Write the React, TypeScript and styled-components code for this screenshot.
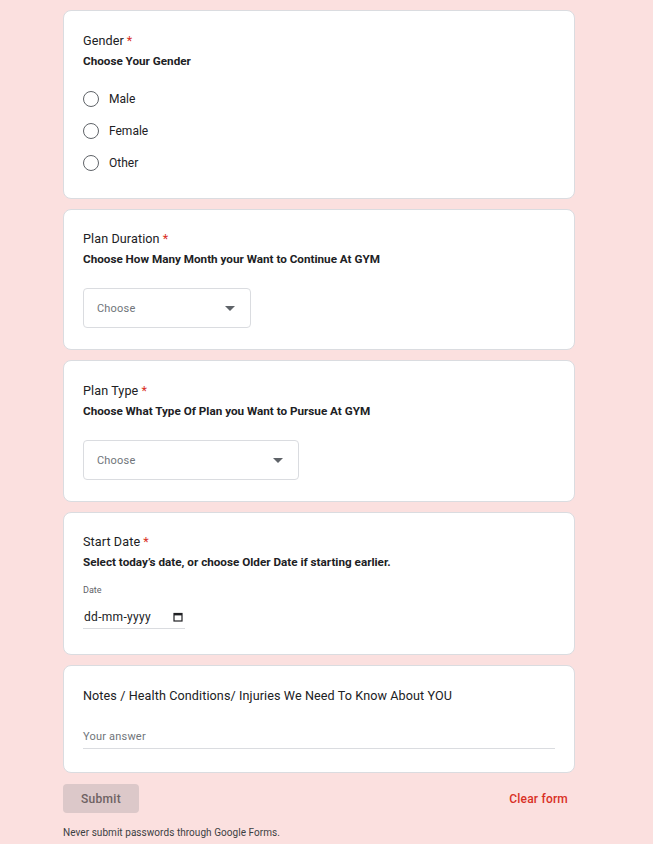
import React from "react";
import styled, { createGlobalStyle } from "styled-components";

const Global = createGlobalStyle`
  html, body { margin: 0; padding: 0; background: #fbe0df; }
  body { font-family: Roboto, "Liberation Sans", Arial, sans-serif; color: #202124; }
`;

const Page = styled.div`
  width: 512px;
  margin-left: 63px;
  padding-top: 10px;
  display: flex;
  flex-direction: column;
`;

const Cards = styled.div`
  display: flex;
  flex-direction: column;
  gap: 10px;
`;

const Card = styled.section<{ $pt: number; $pb: number }>`
  background: #fff;
  border: 1px solid #dadce0;
  border-radius: 8px;
  padding: ${(p) => p.$pt}px 19px ${(p) => p.$pb}px;
  display: flex;
  flex-direction: column;
`;

const Title = styled.div`
  font-size: 12.6px;
  line-height: 20px;
  height: 20px;
  color: #202124;
  letter-spacing: 0.1px;
`;

const Star = styled.span`
  color: #d93025;
  margin-left: 3px;
`;

const Desc = styled.div`
  font-size: 11.7px;
  line-height: 20px;
  font-weight: 700;
  color: #202124;
`;

const RadioGroup = styled.div`
  margin-top: 12px;
  display: flex;
  flex-direction: column;
`;

const RadioRow = styled.label`
  height: 32px;
  display: flex;
  align-items: center;
  gap: 10px;
  font-size: 12px;
  color: #202124;
`;

const Circle = styled.span`
  width: 16px;
  height: 16px;
  box-sizing: border-box;
  border: 1.5px solid #5f6368;
  border-radius: 50%;
`;

const Select = styled.div<{ $w: number }>`
  margin-top: 19px;
  width: ${(p) => p.$w}px;
  height: 40px;
  box-sizing: border-box;
  border: 1px solid #dadce0;
  border-radius: 4px;
  display: flex;
  align-items: center;
  justify-content: space-between;
  padding: 0 15px 0 13px;
  font-size: 11px;
  color: #70757a;
  letter-spacing: 0.2px;
`;

const Arrow = styled.span`
  width: 0;
  height: 0;
  border-left: 5px solid transparent;
  border-right: 5px solid transparent;
  border-top: 5px solid #5f6368;
`;

const SmallLabel = styled.div`
  margin-top: 11px;
  font-size: 9px;
  line-height: 14px;
  color: #5f6368;
`;

const DateField = styled.div`
  margin-top: 9px;
  width: 102px;
  height: 23px;
  box-sizing: border-box;
  border-bottom: 1px solid #dadce0;
  display: flex;
  align-items: center;
  justify-content: space-between;
  padding: 0 2px 0 1px;
  font-size: 12px;
  color: #202124;
  letter-spacing: 0.3px;
`;

const AnswerField = styled.div`
  margin-top: 21px;
  height: 22px;
  box-sizing: border-box;
  border-bottom: 1px solid #dadce0;
  font-size: 11px;
  line-height: 20px;
  color: #70757a;
  letter-spacing: 0.2px;
`;

const Actions = styled.div`
  margin-top: 11px;
  display: flex;
  align-items: center;
  justify-content: space-between;
  padding-right: 7px;
`;

const SubmitButton = styled.button`
  width: 76px;
  height: 29px;
  border: none;
  border-radius: 4px;
  background: #dcc8c9;
  color: #6e6263;
  font-family: Roboto, "Liberation Sans", Arial, sans-serif;
  font-size: 12px;
  font-weight: 500;
  letter-spacing: 0.3px;
  padding: 0;
`;

const ClearButton = styled.span`
  color: #d93025;
  font-size: 12px;
  font-weight: 500;
  letter-spacing: 0.2px;
`;

const Footer = styled.div`
  margin-top: 14px;
  font-size: 10px;
  line-height: 12px;
  color: #3c4043;
  letter-spacing: 0.05px;
`;

const CalendarIcon = () => (
  <svg width="10" height="10" viewBox="0 0 10 10">
    <rect x="1" y="1.5" width="8" height="7.5" fill="none" stroke="#202124" strokeWidth="1.2" />
    <rect x="1" y="1" width="8" height="2.4" fill="#202124" />
  </svg>
);

export default function App() {
  return (
    <>
      <Global />
      <Page>
        <Cards>
          <Card $pt={20} $pb={19}>
            <Title>
              Gender<Star>*</Star>
            </Title>
            <Desc>Choose Your Gender</Desc>
            <RadioGroup>
              {["Male", "Female", "Other"].map((o) => (
                <RadioRow key={o}>
                  <Circle />
                  {o}
                </RadioRow>
              ))}
            </RadioGroup>
          </Card>

          <Card $pt={19} $pb={21}>
            <Title>
              Plan Duration<Star>*</Star>
            </Title>
            <Desc>Choose How Many Month your Want to Continue At GYM</Desc>
            <Select $w={168}>
              Choose
              <Arrow />
            </Select>
          </Card>

          <Card $pt={20} $pb={21}>
            <Title>
              Plan Type<Star>*</Star>
            </Title>
            <Desc>Choose What Type Of Plan you Want to Pursue At GYM</Desc>
            <Select $w={216}>
              Choose
              <Arrow />
            </Select>
          </Card>

          <Card $pt={19} $pb={25}>
            <Title>
              Start Date<Star>*</Star>
            </Title>
            <Desc>Select today’s date, or choose Older Date if starting earlier.</Desc>
            <SmallLabel>Date</SmallLabel>
            <DateField>
              dd-mm-yyyy
              <CalendarIcon />
            </DateField>
          </Card>

          <Card $pt={20} $pb={23}>
            <Title>Notes / Health Conditions/ Injuries We Need To Know About YOU</Title>
            <AnswerField>Your answer</AnswerField>
          </Card>
        </Cards>

        <Actions>
          <SubmitButton>Submit</SubmitButton>
          <ClearButton>Clear form</ClearButton>
        </Actions>
        <Footer>Never submit passwords through Google Forms.</Footer>
      </Page>
    </>
  );
}
